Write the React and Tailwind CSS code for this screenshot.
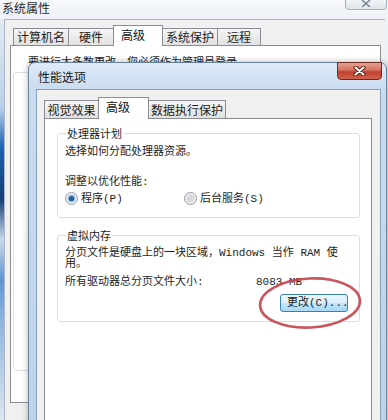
import React from 'react';

const cjk = "font-['Noto_Sans_CJK_SC',sans-serif]";
const mono = "font-['Liberation_Mono','Noto_Sans_CJK_SC',monospace]";

// win7 style radio
function Radio({ checked }) {
    return (
        <svg width="13" height="13" viewBox="0 0 13 13" className="shrink-0">
            <circle cx="6.5" cy="6.5" r="6" fill="#f6f6f6" stroke="#8e969e" strokeWidth="1" />
            {checked ? (
                <>
                    <circle cx="6.5" cy="6.5" r="4" fill="#8fc1e6" />
                    <circle cx="6.5" cy="6.5" r="2.6" fill="#2c5f91" />
                </>
            ) : (
                <circle cx="6.5" cy="6.5" r="4.2" fill="#d9d9d9" />
            )}
        </svg>
    );
}

function Tabs({ items, small }) {
    return (
        <div className={`relative z-10 flex items-end ${small ? 'h-[21px]' : 'h-[22px]'}`}>
            {items.map(([label, w, sel], i) => (
                <div
                    key={label}
                    style={{ width: w }}
                    className={`${cjk} text-[12px] leading-[12px] border border-b-0 border-[#898c95] whitespace-nowrap ${i > 0 ? '-ml-px' : ''} ${
                        sel
                            ? `relative z-10 bg-white h-full flex items-start pl-[7px] pt-[3px] text-[#111]`
                            : `mb-px bg-gradient-to-b from-[#f5f5f5] to-[#e1e1e1] flex items-center justify-center text-[#1e1e1e] ${small ? 'h-[17px]' : 'h-[18px]'}`
                    }`}
                >
                    {label}
                </div>
            ))}
        </div>
    );
}

function GroupBox({ title, className, children }) {
    return (
        <div className={`relative border border-[#d5dfe5] rounded-[3px] flex flex-col ${className}`}>
            <span className={`${cjk} absolute left-[8px] top-[-7px] bg-white px-[1px] text-[11px] leading-[12px] text-[#1e1e1e]`}>
                {title}
            </span>
            {children}
        </div>
    );
}

export default function App() {
    return (
        <div className="relative w-[388px] h-[420px] overflow-hidden bg-[linear-gradient(to_bottom,#f6f8fa_0px,#eef2f6_19px,#e9eef3_100%)] text-[#1e1e1e]">
            {/* back window: 系统属性 */}
            <div className="h-[19px] flex items-start pl-[2px] pt-[1px]">
                <span className={`${cjk} text-[12px] leading-[13px] text-[#2a2a2a]`}>系统属性</span>
            </div>
            <div className="absolute right-[1px] top-[-8px] w-[42px] h-[18px] rounded-b-[4px] border border-[#a3aebb] bg-gradient-to-b from-white to-[#dfe6ee] flex items-end justify-center pb-[2px]">
                <svg width="10" height="7" viewBox="0 0 10 7">
                    <path d="M1 0 L9 7 M9 0 L1 7" stroke="#7d8793" strokeWidth="1.6" />
                </svg>
            </div>

            <div className="flex h-[401px]">
                <div className="w-[4px] bg-[linear-gradient(to_bottom,#e3ebf3_0%,#b9d0e8_22%,#1d62b5_32%,#163f78_45%,#c9d9ea_55%,#5f95d4_65%,#8db4e0_75%,#dde6ef_100%)]" />
                <div className="flex-1 flex flex-col border-t border-l border-[#aab6c3] bg-[#f0f0f0] pl-[5px] pr-[4px] pt-[5px] pb-[17px]">
                    <div className="ml-[3px]">
                        <Tabs
                            small
                            items={[
                                ['计算机名', 56],
                                ['硬件', 46],
                                ['高级', 50, true],
                                ['系统保护', 56],
                                ['远程', 44],
                            ]}
                        />
                    </div>
                    <div className="flex-1 -mt-px border border-[#898c95] bg-white flex flex-col px-px pt-[11px]">
                        <div className={`${mono} pl-[16px] text-[11px] leading-[12px] whitespace-nowrap`}>
                            要进行大多数更改，您必须作为管理员登录。
                        </div>
                        <div className="ml-px mt-[3px] h-[299px] border border-[#d5dfe5] rounded-[3px]" />
                    </div>
                </div>
                <div className="w-[3px]" />
            </div>

            {/* front window: 性能选项 */}
            <div className="absolute left-[28px] top-[62px] w-[359px] h-[370px] flex flex-col border border-[#6a819c] rounded-t-[7px] bg-[linear-gradient(to_bottom,#dfebf7_0px,#c9dcf0_26px,#bcd3ea_100%)] shadow-[0_0_6px_rgba(0,0,0,0.3)]">
                <div className="h-[26px] flex items-center pl-[9px]">
                    <span className={`${cjk} text-[12px] leading-[13px] text-[#1a1a1a]`}>性能选项</span>
                </div>
                <div className="absolute top-[-1px] right-[4px] w-[45px] h-[18px] rounded-b-[4px] border border-[#6b2b22] bg-[linear-gradient(to_bottom,#e6a295_0%,#d3705f_45%,#c0402f_55%,#d2604c_100%)] flex items-center justify-center">
                    <svg width="13" height="10" viewBox="0 0 13 10">
                        <path d="M2.5 1.5 L10.5 8.5 M10.5 1.5 L2.5 8.5" stroke="#5a1e16" strokeWidth="4" strokeLinecap="round" />
                        <path d="M2.5 1.5 L10.5 8.5 M10.5 1.5 L2.5 8.5" stroke="#ffffff" strokeWidth="2" strokeLinecap="round" />
                    </svg>
                </div>

                <div className="flex-1 ml-[7px] mr-[5px] flex flex-col border border-[#8aa0ba] bg-[#f0f0f0] pl-[7px] pr-[8px] pt-[7px]">
                    <Tabs
                        items={[
                            ['视觉效果', 55],
                            ['高级', 51, true],
                            ['数据执行保护', 78],
                        ]}
                    />
                    <div className={`${mono} flex-1 -mt-px border border-[#898c95] bg-white flex flex-col pl-[12px] pr-[11px] text-[11px] text-[#1e1e1e]`}>
                        <GroupBox title="处理器计划" className="mt-[14px] h-[85px] pl-[7px] pt-[12px]">
                            <div className="leading-[12px]">选择如何分配处理器资源。</div>
                            <div className="leading-[12px] mt-[18px]">调整以优化性能:</div>
                            <div className="flex items-center mt-[4px] h-[13px] leading-[12px]">
                                <div className="w-[119px] flex items-center gap-[3px]">
                                    <Radio checked />
                                    <span>程序(P)</span>
                                </div>
                                <div className="flex items-center gap-[3px]">
                                    <Radio />
                                    <span>后台服务(S)</span>
                                </div>
                            </div>
                        </GroupBox>

                        <GroupBox title="虚拟内存" className="mt-[17px] h-[87px] pl-[7px] pr-[11px] pt-[12px]">
                            <div className="leading-[11px] whitespace-nowrap">分页文件是硬盘上的一块区域，Windows 当作 RAM 使</div>
                            <div className="leading-[11px]">用。</div>
                            <div className="flex mt-[6px] leading-[12px] whitespace-nowrap">
                                <span className="w-[191px]">所有驱动器总分页文件大小:</span>
                                <span>8083 MB</span>
                            </div>
                            <button className="self-end mt-[6px] w-[68px] h-[18px] rounded-[3px] border border-[#3c7fb1] bg-[linear-gradient(to_bottom,#eaf6fd_0%,#d9f0fc_50%,#bee6fd_51%,#a7d9f5_100%)] flex items-center pl-[6px] leading-[12px] whitespace-nowrap">
                                更改(C)...
                            </button>
                        </GroupBox>
                    </div>
                </div>
            </div>

            {/* red circle around the button */}
            <svg className="absolute left-[256px] top-[274px]" width="108" height="58" viewBox="0 0 108 58">
                <ellipse cx="54" cy="29" rx="50" ry="24.5" fill="none" stroke="#c4434b" strokeWidth="2.6" opacity="0.9" transform="rotate(-3 54 29)" />
            </svg>
        </div>
    );
}
